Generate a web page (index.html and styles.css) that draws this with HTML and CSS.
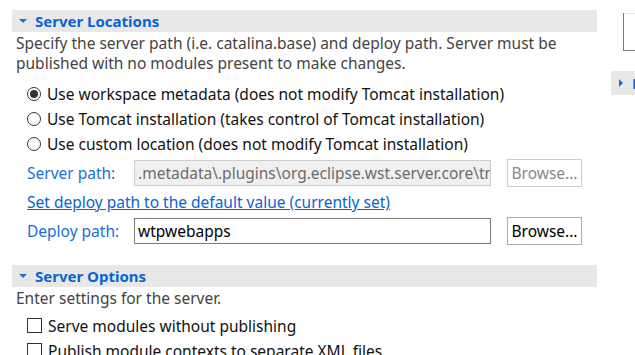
FILE: index.html
```html
<!DOCTYPE html>
<html>
<head>
<meta name="viewport" content="width=device-width, initial-scale=1">
<link rel="stylesheet" href="styles.css">
</head>
<body>

<div class="page">
  <div class="editor">

    <div class="section-head"><span class="twisty down"></span>Server Locations</div>
    <p class="desc">Specify the server path (i.e. catalina.base) and deploy path. Server must be
      published with no modules present to make changes.</p>

    <div class="choices">
      <label class="choice"><span class="radio checked"></span>Use workspace metadata (does not modify Tomcat installation)</label>
      <label class="choice"><span class="radio"></span>Use Tomcat installation (takes control of Tomcat installation)</label>
      <label class="choice"><span class="radio"></span>Use custom location (does not modify Tomcat installation)</label>
    </div>

    <div class="field-row first">
      <span class="field-label">Server path:</span>
      <span class="textbox disabled">.metadata\.plugins\org.eclipse.wst.server.core\tmp0</span>
      <span class="button disabled">Browse...</span>
    </div>

    <a class="link" href="#">Set deploy path to the default value (currently set)</a>

    <div class="field-row">
      <span class="field-label">Deploy path:</span>
      <span class="textbox">wtpwebapps</span>
      <span class="button">Browse...</span>
    </div>

    <div class="section-head second"><span class="twisty down"></span>Server Options</div>
    <p class="desc">Enter settings for the server.</p>

    <div class="choices checks">
      <label class="choice"><span class="check"></span>Serve modules without publishing</label>
      <label class="choice"><span class="check"></span>Publish module contexts to separate XML files</label>
    </div>
  </div>

  <div class="side">
    <div class="side-box"><div class="side-box-line"></div></div>
    <div class="section-head side-head"><span class="twisty right"></span>M</div>
  </div>
</div>

</body>
</html>
```

FILE: styles.css
```css
body {
  margin: 0;
  background: #fff;
  font-family: "Noto Sans", "Open Sans", sans-serif;
  font-size: 15.5px;
  color: #000;
  overflow: hidden;
}

.page {
  display: flex;
  height: 355px;
}

.editor {
  width: 585px;
  margin-left: 12px;
  padding-top: 10px;
  flex-shrink: 0;
}

.section-head {
  height: 22px;
  background: #e8e8e8;
  color: #0a64d2;
  font-size: 15px;
  font-weight: bold;
  line-height: 22px;
  display: flex;
  align-items: center;
  white-space: nowrap;
  overflow: hidden;
}

.section-head.second {
  margin-top: 21px;
}

.twisty {
  width: 0;
  height: 0;
  margin: 0 8px 0 7px;
}

.twisty.down {
  border-left: 4px solid transparent;
  border-right: 4px solid transparent;
  border-top: 4px solid #1a6fd8;
}

.twisty.right {
  border-top: 4px solid transparent;
  border-bottom: 4px solid transparent;
  border-left: 4px solid #1a6fd8;
  margin: 0 9px 0 8px;
}

.desc {
  margin: 0;
  padding: 1px 0 0 4px;
  line-height: 20px;
  color: #444;
}

.choices {
  padding: 8px 0 0 15px;
}

.choices.checks {
  padding-top: 5px;
}

.choice {
  display: flex;
  align-items: center;
  height: 25px;
  white-space: nowrap;
  color: #111;
}

.radio {
  width: 12px;
  height: 12px;
  border: 1px solid #333;
  border-radius: 50%;
  margin-right: 6px;
  display: flex;
  align-items: center;
  justify-content: center;
}

.radio.checked::after {
  content: "";
  width: 8px;
  height: 8px;
  border-radius: 50%;
  background: #333;
}

.check {
  width: 13px;
  height: 13px;
  border: 1px solid #333;
  margin-right: 6px;
}

.field-row {
  display: flex;
  align-items: center;
  height: 26px;
  padding-left: 15px;
  margin-top: 6px;
}

.field-row.first {
  margin-top: 4px;
}

.field-label {
  width: 107px;
  color: #1a6fd8;
}

.textbox {
  width: 349px;
  height: 24px;
  border: 1px solid #7a7a7a;
  padding: 0 3px;
  line-height: 24px;
  white-space: nowrap;
  overflow: hidden;
}

.textbox.disabled {
  background: #f0f0f0;
  border-color: #ccc;
  color: #6d6d6d;
}

.button {
  margin-left: 16px;
  width: 73px;
  height: 26px;
  border: 1px solid #adadad;
  line-height: 26px;
  text-align: center;
  background: #fff;
}

.button.disabled {
  border-color: #ccc;
  color: #888;
}

.link {
  display: block;
  margin: 6px 0 0 15px;
  line-height: 20px;
  color: #0a64d2;
}

.side {
  margin-left: 14px;
  flex: 1;
}

.side-box {
  margin-left: 12px;
  height: 37px;
  border-left: 1px solid #7a7a7a;
  border-bottom: 1px solid #7a7a7a;
}

.side-box-line {
  margin-top: 13px;
  border-top: 1px solid #e8e8e8;
}

.side-head {
  margin-top: 20px;
  height: 24px;
}
```
